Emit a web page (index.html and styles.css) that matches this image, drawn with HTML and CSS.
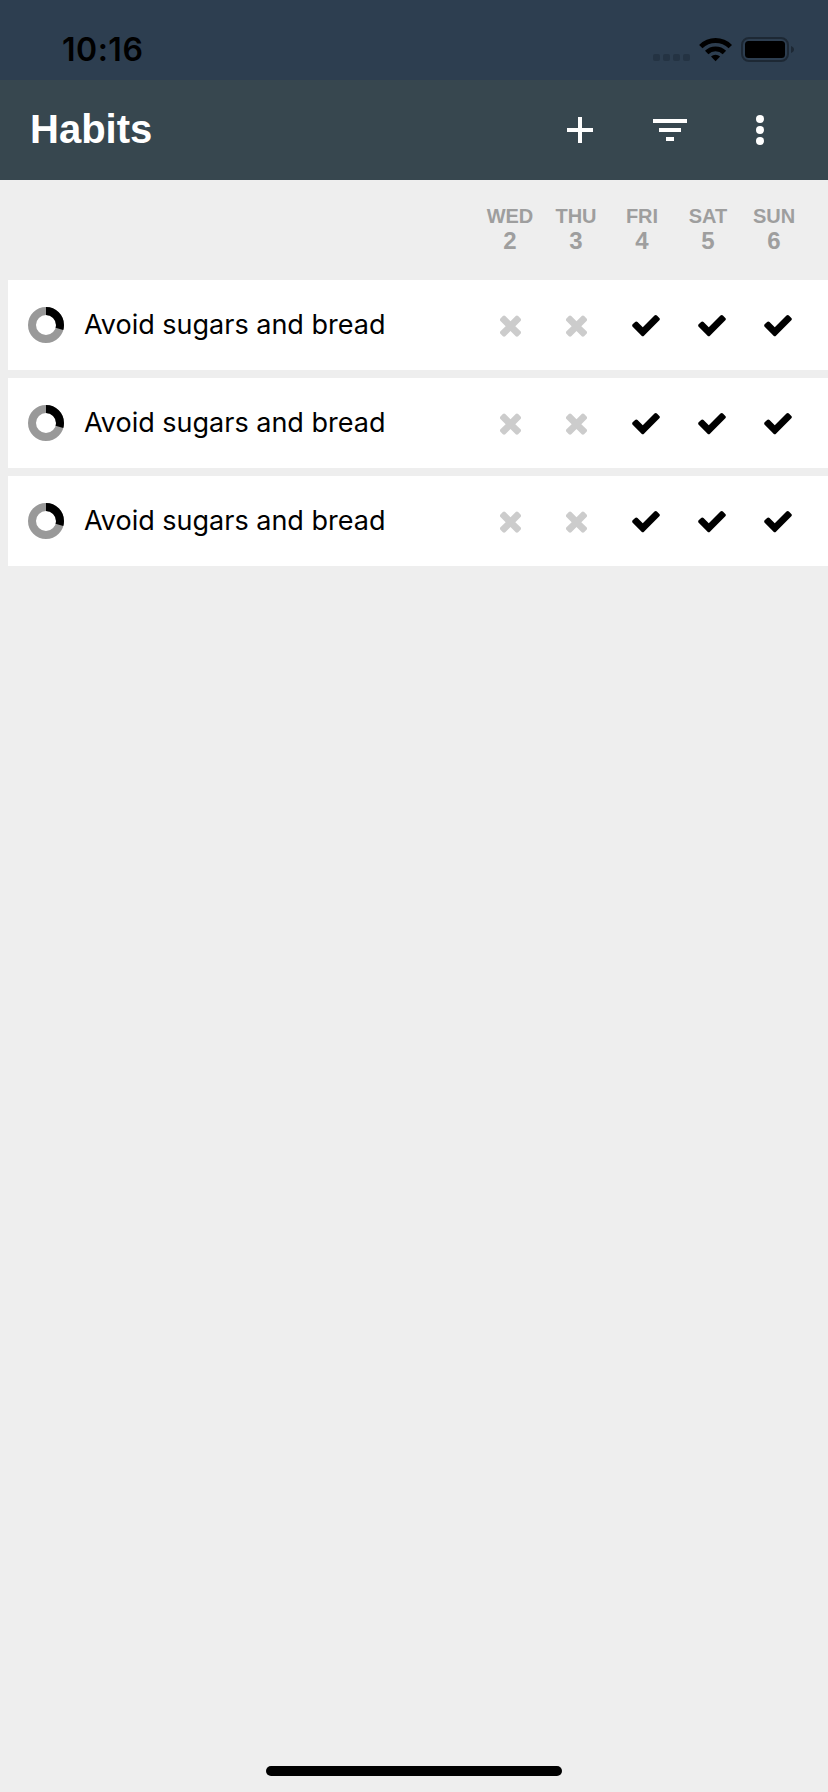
FILE: index.html
```html
<!DOCTYPE html>
<html lang="en">
<head>
<meta charset="utf-8">
<title>Habits</title>
<link rel="stylesheet" href="styles.css">
</head>
<body>
<svg class="symbols" aria-hidden="true">
  <symbol id="ring" viewBox="0 0 36 36">
    <circle cx="18" cy="18" r="14" fill="none" stroke="#999" stroke-width="8"/>
    <circle cx="18" cy="18" r="14" fill="none" stroke="#000" stroke-width="8" pathLength="100" stroke-dasharray="29.6 100" transform="rotate(-90 18 18)"/>
  </symbol>
  <symbol id="missed" viewBox="192 0 1408 1792">
    <path d="M1490 1322q0 40-28 68l-136 136q-28 28-68 28t-68-28l-294-294-294 294q-28 28-68 28t-68-28l-136-136q-28-28-28-68t28-68l294-294-294-294q-28-28-28-68t28-68l136-136q28-28 68-28t68 28l294 294 294-294q28-28 68-28t68 28l136 136q28 28 28 68t-28 68l-294 294 294 294q28 28 28 68z"/>
  </symbol>
  <symbol id="done" viewBox="0 0 1792 1792">
    <path d="M1671 566q0 40-28 68l-724 724-136 136q-28 28-68 28t-68-28l-136-136-362-362q-28-28-28-68t28-68l136-136q28-28 68-28t68 28l294 295 656-657q28-28 68-28t68 28l136 136q28 28 28 68z"/>
  </symbol>
</svg>
<div class="screen">
  <div class="status">
    <span class="time">10:16</span>
    <svg class="indicators" width="142" height="28" viewBox="0 0 142 28">
      <g fill="#243343">
        <rect x="0" y="19" width="7" height="7" rx="2"/>
        <rect x="10" y="19" width="7" height="7" rx="2"/>
        <rect x="20" y="19" width="7" height="7" rx="2"/>
        <rect x="30" y="19" width="7" height="7" rx="2"/>
      </g>
      <path d="M46.1 9.9A23.3 23.3 0 0 1 79 9.9L75.6 13.3A18.5 18.5 0 0 0 49.5 13.3Z"/>
      <path d="M52 15.8A14.9 14.9 0 0 1 73.1 15.8L69.7 19.2A10.1 10.1 0 0 0 55.4 19.2Z"/>
      <path d="M58 21.6A6.5 6.5 0 0 1 67.1 21.6L62.55 26.2Z"/>
      <rect x="89" y="3" width="46" height="23" rx="7" fill="none" stroke="#1d2834" stroke-width="2"/>
      <rect x="92" y="6" width="40" height="17" rx="3.5"/>
      <path d="M138 11C142 12.5 142 16.5 138 18Z" fill="#1d2834"/>
    </svg>
  </div>
  <header class="toolbar">
    <h1 class="title">Habits</h1>
    <svg class="action" viewBox="0 0 48 48"><path d="M24 11v26M11 24h26" stroke="#fff" stroke-width="4"/></svg>
    <svg class="action" viewBox="0 0 48 48"><path d="M7 15h34M13 24h22M20 33h8" stroke="#fff" stroke-width="4"/></svg>
    <svg class="action" viewBox="0 0 48 48" fill="#fff"><circle cx="24" cy="13" r="4"/><circle cx="24" cy="24" r="4"/><circle cx="24" cy="35" r="4"/></svg>
  </header>
  <div class="days">
    <div class="day"><span>WED</span><b>2</b></div>
    <div class="day"><span>THU</span><b>3</b></div>
    <div class="day"><span>FRI</span><b>4</b></div>
    <div class="day"><span>SAT</span><b>5</b></div>
    <div class="day"><span>SUN</span><b>6</b></div>
  </div>
  <main class="habits">
    <div class="habit">
      <svg class="ring"><use href="#ring"/></svg>
      <span class="name">Avoid sugars and bread</span>
      <div class="marks">
        <svg class="missed"><use href="#missed"/></svg><svg class="missed"><use href="#missed"/></svg>
        <svg class="done"><use href="#done"/></svg><svg class="done"><use href="#done"/></svg><svg class="done"><use href="#done"/></svg>
      </div>
    </div>
    <div class="habit">
      <svg class="ring"><use href="#ring"/></svg>
      <span class="name">Avoid sugars and bread</span>
      <div class="marks">
        <svg class="missed"><use href="#missed"/></svg><svg class="missed"><use href="#missed"/></svg>
        <svg class="done"><use href="#done"/></svg><svg class="done"><use href="#done"/></svg><svg class="done"><use href="#done"/></svg>
      </div>
    </div>
    <div class="habit">
      <svg class="ring"><use href="#ring"/></svg>
      <span class="name">Avoid sugars and bread</span>
      <div class="marks">
        <svg class="missed"><use href="#missed"/></svg><svg class="missed"><use href="#missed"/></svg>
        <svg class="done"><use href="#done"/></svg><svg class="done"><use href="#done"/></svg><svg class="done"><use href="#done"/></svg>
      </div>
    </div>
  </main>
  <div class="home-bar"></div>
</div>
</body>
</html>
```
FILE: styles.css
```css
* { box-sizing: border-box; }
body { margin: 0; background: #eee; }
.symbols { display: none; }
.screen {
  display: flex;
  flex-direction: column;
  width: 828px;
  height: 1792px;
  background: #eee;
  font-family: "Liberation Sans", Arial, sans-serif;
}
.status {
  display: flex;
  justify-content: space-between;
  align-items: flex-start;
  height: 80px;
  padding: 35px 33px 0 62px;
  background: #2d3e50;
}
.time {
  margin-top: -1px;
  font: 600 32px/32px Inter, sans-serif;
  letter-spacing: 0.5px;
  color: #000;
}
.toolbar {
  display: flex;
  align-items: center;
  gap: 42px;
  height: 100px;
  padding: 0 44px 0 30px;
  background: #37474f;
}
.title {
  flex: 1;
  margin: 0;
  padding-bottom: 2px;
  font-size: 40px;
  line-height: 46px;
  font-weight: 700;
  color: #fff;
}
.action { width: 48px; height: 48px; }
.days {
  display: grid;
  grid-template-columns: repeat(5, 66px);
  justify-content: end;
  height: 100px;
  padding: 25px 21px 0 0;
  color: #9e9e9e;
  font-weight: 700;
  text-align: center;
}
.day { display: flex; flex-direction: column; }
.day span { font-size: 20px; line-height: 23px; }
.day b { font-size: 24px; line-height: 26px; }
.habits {
  display: flex;
  flex-direction: column;
  gap: 8px;
  padding-left: 8px;
}
.habit {
  display: flex;
  align-items: center;
  height: 90px;
  padding-left: 20px;
  background: #fff;
}
.ring { width: 36px; height: 36px; margin-right: 20px; }
.name {
  flex: 1;
  padding-bottom: 1px;
  font: 400 27px/34px Inter, sans-serif;
  color: #000;
  white-space: nowrap;
}
.marks {
  display: grid;
  grid-template-columns: repeat(5, 66px);
}
.missed { width: 25px; height: 32px; fill: #ccc; }
.done { width: 32px; height: 32px; fill: #000; }
.home-bar {
  width: 296px;
  height: 10px;
  margin: auto auto 16px;
  border-radius: 5px;
  background: #000;
}
```
